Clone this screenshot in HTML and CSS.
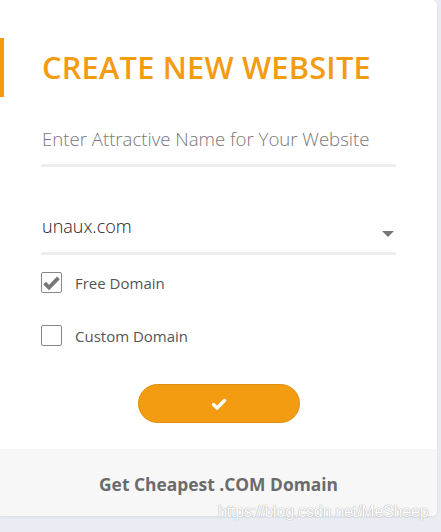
FILE: index.html
```html
<!DOCTYPE html>
<html lang="en">
<head>
  <meta charset="UTF-8" />
  <meta name="viewport" content="width=device-width, initial-scale=1.0"/>
  <title>Create New Website</title>
  <link rel="stylesheet" href="styles.css">
</head>
<body>
  <div class="card">
    <h2 class="card-title">CREATE NEW WEBSITE</h2>

    <div class="form">
      <input class="name-input" type="text" placeholder="Enter Attractive Name for Your Website">

      <div class="domain-select">
        <span>unaux.com</span>
        <span class="caret"></span>
      </div>

      <label class="check-row">
        <span class="box checked">
          <svg viewBox="0 0 16 16" width="17" height="17"><path d="M1.5 8.5l4.2 4.2 8.8-9" fill="none" stroke="#777" stroke-width="3.6"/></svg>
        </span>
        Free Domain
      </label>
      <label class="check-row">
        <span class="box"></span>
        Custom Domain
      </label>

      <div class="actions">
        <button class="go-btn">
          <svg viewBox="0 0 16 16" width="16" height="16"><path d="M2.5 8.5l3.5 3.5 7.5-7.5" fill="none" stroke="#fff" stroke-width="3.4" stroke-linecap="round" stroke-linejoin="round"/></svg>
        </button>
      </div>
    </div>

    <div class="card-footer">Get Cheapest .COM Domain</div>
  </div>

  <div class="watermark">https://blog.csdn.net/MeSheep</div>
</body>
</html>
```

FILE: styles.css
```css
body {
  margin: 0;
  background: #e9ecf3;
  font-family: "Open Sans", sans-serif;
  height: 532px;
  position: relative;
}

.card {
  width: 437px;
  height: 516px;
  background: #fff;
  border-radius: 0 5px 5px 0;
  box-shadow: 0 1px 3px rgba(0,0,0,0.08);
  display: flex;
  flex-direction: column;
}

.card-title {
  margin: 38px 0 0;
  border-left: 4px solid #f39c12;
  padding-left: 38px;
  line-height: 59px;
  font-size: 30.8px;
  font-weight: 600;
  color: #f39c12;
  letter-spacing: 0.2px;
}

.form {
  padding: 0 41px;
  flex-grow: 1;
}

.name-input {
  display: block;
  width: 100%;
  box-sizing: border-box;
  margin-top: 20px;
  height: 50px;
  border: none;
  border-bottom: 3px solid #eee;
  padding: 0 0 5px 1px;
  font-family: "Open Sans", sans-serif;
  font-size: 18.6px;
  font-weight: 300;
  color: #333;
  outline: none;
}

.name-input::placeholder {
  color: #777;
}

.domain-select {
  display: flex;
  justify-content: space-between;
  align-items: center;
  margin-top: 38px;
  height: 50px;
  padding: 0 2px 0 1px;
  border-bottom: 3px solid #eee;
  box-sizing: border-box;
  font-size: 18px;
  font-weight: 300;
  color: #222;
}

.domain-select span:first-child {
  margin-top: -6px;
}

.caret {
  width: 0;
  height: 0;
  border-left: 6px solid transparent;
  border-right: 6px solid transparent;
  border-top: 6px solid #777;
  margin-top: 10px;
}

.check-row {
  display: flex;
  align-items: center;
  gap: 13px;
  font-size: 15px;
  color: #555;
  height: 21px;
  margin-top: 17px;
}

.check-row + .check-row {
  margin-top: 32px;
}

.box {
  width: 21px;
  height: 21px;
  box-sizing: border-box;
  border: 1px solid #888;
  border-radius: 2px;
  display: flex;
  align-items: center;
  justify-content: center;
}

.actions {
  display: flex;
  justify-content: center;
  margin-top: 38px;
}

.go-btn {
  width: 162px;
  height: 39px;
  margin-left: 1px;
  border-radius: 20px;
  background: #f39c12;
  border: 1px solid #e08e0b;
  display: flex;
  align-items: center;
  justify-content: center;
  cursor: pointer;
}

.card-footer {
  height: 67px;
  background: #f7f7f7;
  border-radius: 0 0 5px 0;
  display: flex;
  align-items: center;
  justify-content: center;
  padding-top: 3px;
  box-sizing: border-box;
  font-size: 17.4px;
  font-weight: 700;
  color: #6b6b6b;
}

.watermark {
  position: absolute;
  left: 218px;
  top: 503px;
  font-family: "Liberation Sans", Arial, sans-serif;
  font-size: 16px;
  letter-spacing: -0.2px;
  color: #fff;
  text-shadow: 0 0 1px #aaa, 0 0 1px #aaa;
}
```
